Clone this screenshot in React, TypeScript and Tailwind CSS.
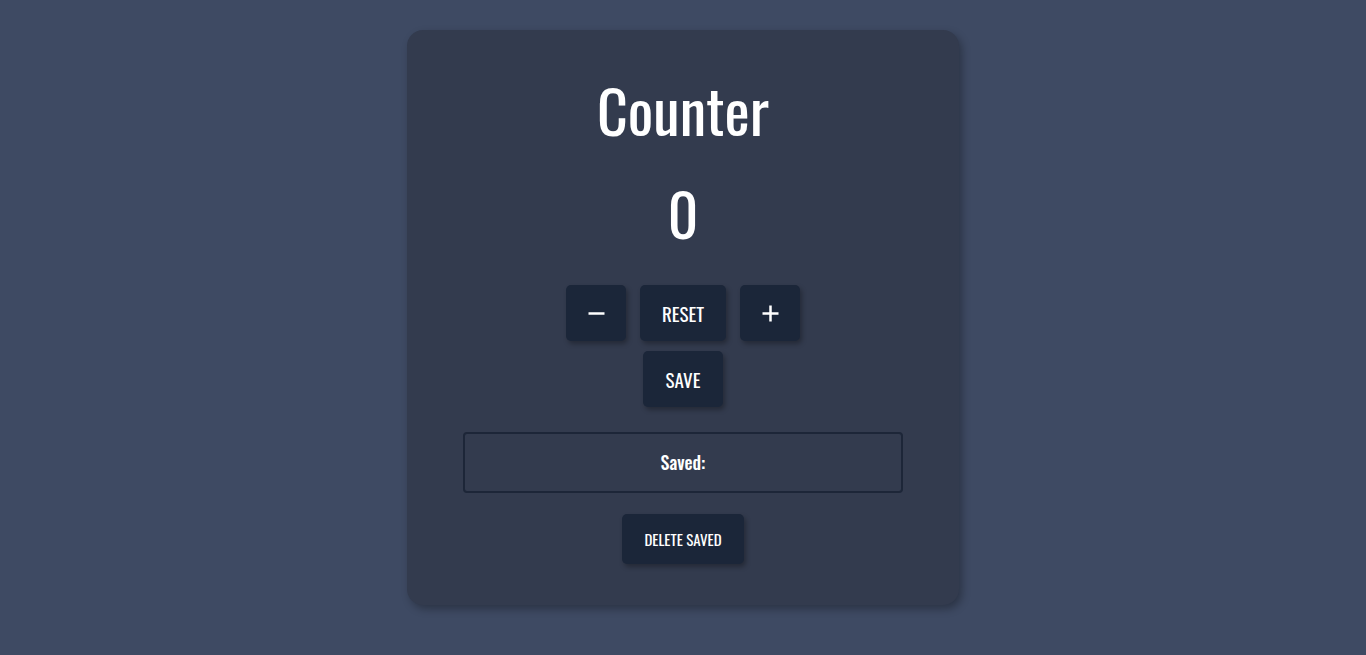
import { useState } from 'react'

const FONT = "font-['Oswald','Liberation_Sans_Narrow','DejaVu_Sans_Condensed',sans-serif]"

const btn =
  'flex items-center justify-center rounded-[5px] bg-[#1b2639] text-white shadow-[2px_3px_5px_rgba(0,0,0,0.3)]'

export default function App() {
  const [count, setCount] = useState(0)
  const [saved, setSaved] = useState<number[]>([])

  return (
    <div className={`min-h-screen w-full bg-[#3e4a63] pt-[30px] ${FONT}`}>
      <div className="mx-auto flex w-[552px] flex-col items-center rounded-[16px] bg-[#333b4e] pt-[41px] pb-[41px] shadow-[3px_4px_8px_rgba(0,0,0,0.3)]">
        <h1 className="h-[76px] text-[60px] leading-[76px] font-normal text-white">Counter</h1>
        <div className="mt-[27px] h-[76px] text-[60px] leading-[76px] text-white">{count}</div>

        {/* Controls */}
        <div className="mt-[35px] flex gap-[14px]">
          <button onClick={() => setCount(c => c - 1)} className={`${btn} h-[56px] w-[60px]`}>
            <svg width="17" height="17" viewBox="0 0 17 17">
              <path d="M0.5 8.5h16" stroke="white" strokeWidth="2.5" />
            </svg>
          </button>
          <button onClick={() => setCount(0)} className={`${btn} h-[56px] w-[86px] text-[19px]`}>RESET</button>
          <button onClick={() => setCount(c => c + 1)} className={`${btn} h-[56px] w-[60px]`}>
            <svg width="17" height="17" viewBox="0 0 17 17">
              <path d="M0.5 8.5h16M8.5 0.5v16" stroke="white" strokeWidth="2.5" />
            </svg>
          </button>
        </div>
        <button onClick={() => setSaved(s => [...s, count])} className={`${btn} mt-[10px] h-[56px] w-[80px] text-[19px]`}>
          SAVE
        </button>

        {/* Saved list */}
        <div className="mt-[25px] flex h-[61px] w-[440px] items-center justify-center rounded-[4px] border-2 border-[#1d2638] text-[18px] font-medium text-white">
          Saved: {saved.join(' - ')}
        </div>

        <button onClick={() => setSaved([])} className={`${btn} mt-[21px] h-[50px] w-[122px] text-[15px]`}>
          DELETE SAVED
        </button>
      </div>
    </div>
  )
}
